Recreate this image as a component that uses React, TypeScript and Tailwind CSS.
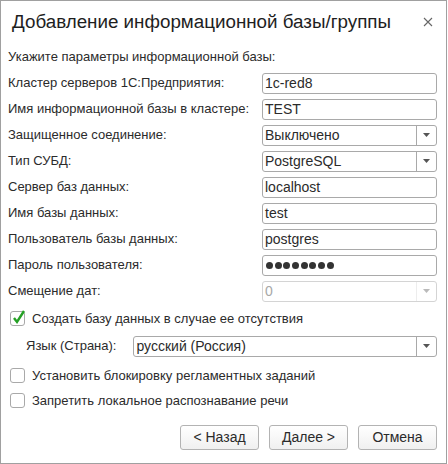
import type { ReactNode } from 'react'

const font = { fontFamily: '"Liberation Sans", Arial, sans-serif' }

function Arrow() {
    return (
        <svg width="7" height="4" viewBox="0 0 7 4">
            <path d="M0 0h7L3.5 4z" fill="#555" />
        </svg>
    )
}

function TextField({ value, disabled }: { value: ReactNode; disabled?: boolean }) {
    return (
        <div className={`flex items-center w-[175px] h-[21px] rounded-[3px] border bg-white pl-[2px] text-[14px] ${disabled ? 'border-[#d4d4d4] text-[#a8a8a8]' : 'border-[#a9a9a9] text-[#2b2b2b]'}`}>
            {value}
        </div>
    )
}

function SelectField({ value, disabled, width = 'w-[175px]' }: { value: string; disabled?: boolean; width?: string }) {
    return (
        <div className={`flex items-stretch ${width} h-[21px] rounded-[3px] border bg-white text-[14px] ${disabled ? 'border-[#d4d4d4] text-[#a8a8a8]' : 'border-[#a9a9a9] text-[#2b2b2b]'}`}>
            <div className="flex-1 flex items-center pl-[2px]">{value}</div>
            <div className={`w-[20px] flex items-center justify-center border-l ${disabled ? 'border-[#d4d4d4] opacity-40' : 'border-[#a9a9a9]'}`}>
                <Arrow />
            </div>
        </div>
    )
}

function Row({ label, children }: { label: string; children: ReactNode }) {
    return (
        <div className="flex items-center justify-between h-[26px]">
            <span>{label}</span>
            {children}
        </div>
    )
}

function Checkbox({ checked, label, className = '' }: { checked?: boolean; label: string; className?: string }) {
    return (
        <div className={`flex items-center h-[25px] pl-[2px] gap-[7px] ${className}`}>
            <div className="relative w-[15px] h-[15px] rounded-[3px] border border-[#a9a9a9] bg-white">
                {checked && (
                    <svg className="absolute left-[1px] top-[-3px]" width="14" height="16" viewBox="0 0 14 16">
                        <path d="M2 9l3 4 7-11" fill="none" stroke="#25a025" strokeWidth="2.4" />
                    </svg>
                )}
            </div>
            <span>{label}</span>
        </div>
    )
}

function Button({ children }: { children: ReactNode }) {
    return (
        <div className="w-[79px] h-[25px] flex items-center justify-center rounded-[3px] border border-[#b3b3b3] bg-gradient-to-b from-white to-[#f0f0f0] text-[14px]">
            {children}
        </div>
    )
}

export default function App() {
    return (
        <div style={font} className="w-[447px] h-[464px] bg-white border border-[#a0a0a0] flex flex-col text-[13px] text-[#2b2b2b]">
            <div className="flex items-center justify-between h-[42px] pl-[11px] pr-[13px]">
                <span className="text-[18.8px] text-[#1e1e1e]">Добавление информационной базы/группы</span>
                <svg width="10" height="10" viewBox="0 0 10 10">
                    <path d="M1 1l8 8M9 1l-8 8" stroke="#666" strokeWidth="1.1" />
                </svg>
            </div>

            <div className="flex flex-col pl-[7px] pr-[9px]">
                <div className="h-[27px] flex items-center">Укажите параметры информационной базы:</div>
                <Row label="Кластер серверов 1С:Предприятия:"><TextField value="1c-red8" /></Row>
                <Row label="Имя информационной базы в кластере:"><TextField value="TEST" /></Row>
                <Row label="Защищенное соединение:"><SelectField value="Выключено" /></Row>
                <Row label="Тип СУБД:"><SelectField value="PostgreSQL" /></Row>
                <Row label="Сервер баз данных:"><TextField value="localhost" /></Row>
                <Row label="Имя базы данных:"><TextField value="test" /></Row>
                <Row label="Пользователь базы данных:"><TextField value="postgres" /></Row>
                <Row label="Пароль пользователя:">
                    <TextField
                        value={
                            <div className="flex gap-[1.7px] pl-[1px]">
                                {Array.from({ length: 8 }).map((_, i) => (
                                    <div key={i} className="w-[7px] h-[7px] rounded-full bg-[#333]" />
                                ))}
                            </div>
                        }
                    />
                </Row>
                <Row label="Смещение дат:"><SelectField value="0" disabled /></Row>

                <Checkbox checked label="Создать базу данных в случае ее отсутствия" className="mt-[2px]" />
                <div className="flex items-center h-[28px] pl-[18px] mt-[1px]">
                    <span className="w-[108px]">Язык (Страна):</span>
                    <SelectField value="русский (Россия)" width="w-[305px]" />
                </div>
                <Checkbox label="Установить блокировку регламентных заданий" className="mt-[3px]" />
                <Checkbox label="Запретить локальное распознавание речи" />

                <div className="flex justify-end gap-[10px] mt-[12px]">
                    <Button>&lt; Назад</Button>
                    <Button>Далее &gt;</Button>
                    <Button>Отмена</Button>
                </div>
            </div>
        </div>
    )
}
